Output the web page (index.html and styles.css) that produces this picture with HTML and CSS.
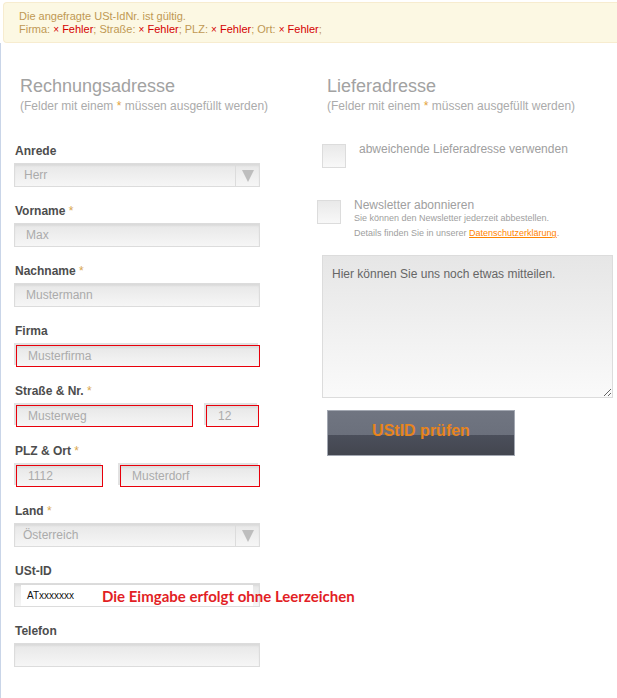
FILE: index.html
```html
<!DOCTYPE html>
<html lang="de">
<head>
<meta charset="utf-8">
<title>Adresse</title>
<link rel="stylesheet" href="styles.css">
</head>
<body>
<div class="alert">
  <div>Die angefragte USt-IdNr. ist gültig.</div>
  <div>Firma: <span class="x">×</span> <span class="bad">Fehler</span>; Straße: <span class="x">×</span> <span class="bad">Fehler</span>; PLZ: <span class="x">×</span> <span class="bad">Fehler</span>; Ort: <span class="x">×</span> <span class="bad">Fehler</span>;</div>
</div>
<div class="main">
  <section class="col col-left">
    <h2 class="title">Rechnungsadresse</h2>
    <p class="hint">(Felder mit einem <span class="req">*</span> müssen ausgefüllt werden)</p>
    <div class="fields">
      <div class="row">
        <label class="lbl">Anrede</label>
        <div class="field select"><span class="val">Herr</span><span class="arrow"><span class="tri"></span></span></div>
      </div>
      <div class="row">
        <label class="lbl">Vorname <span class="req">*</span></label>
        <div class="field"><span class="val">Max</span></div>
      </div>
      <div class="row">
        <label class="lbl">Nachname <span class="req">*</span></label>
        <div class="field"><span class="val">Mustermann</span></div>
      </div>
      <div class="row">
        <label class="lbl">Firma</label>
        <div class="field err w-firma"><span class="val">Musterfirma</span></div>
      </div>
      <div class="row">
        <label class="lbl">Straße &amp; Nr. <span class="req">*</span></label>
        <div class="pair">
          <div class="field err w-street"><span class="val">Musterweg</span></div>
          <div class="field err w-nr"><span class="val">12</span></div>
        </div>
      </div>
      <div class="row">
        <label class="lbl">PLZ &amp; Ort <span class="req">*</span></label>
        <div class="pair">
          <div class="field err w-plz"><span class="val">1112</span></div>
          <div class="field err w-ort"><span class="val">Musterdorf</span></div>
        </div>
      </div>
      <div class="row">
        <label class="lbl">Land <span class="req">*</span></label>
        <div class="field select"><span class="val val-sel">Österreich</span><span class="arrow"><span class="tri"></span></span></div>
      </div>
      <div class="row">
        <label class="lbl">USt-ID</label>
        <div class="field ust"><span class="inner">ATxxxxxxx</span><span class="note">Die Eimgabe erfolgt ohne Leerzeichen</span></div>
      </div>
      <div class="row">
        <label class="lbl">Telefon</label>
        <div class="field"></div>
      </div>
    </div>
  </section>
  <section class="col col-right">
    <h2 class="title">Lieferadresse</h2>
    <p class="hint">(Felder mit einem <span class="req">*</span> müssen ausgefüllt werden)</p>
    <div class="check check-1">
      <span class="box"></span>
      <span class="check-text">abweichende Lieferadresse verwenden</span>
    </div>
    <div class="check check-2">
      <span class="box"></span>
      <div class="check-text">
        <div class="nl-title">Newsletter abonnieren</div>
        <div class="small">Sie können den Newsletter jederzeit abbestellen.</div>
        <div class="small">Details finden Sie in unserer <a href="#" class="link">Datenschutzerklärung</a>.</div>
      </div>
    </div>
    <textarea class="msg" placeholder="Hier können Sie uns noch etwas mitteilen."></textarea>
    <button class="btn" type="button">UStID prüfen</button>
  </section>
</div>
</body>
</html>
```
FILE: styles.css
```css
html, body {
  margin: 0;
  padding: 0;
  background: #fff;
}
body {
  font-family: "Liberation Sans", Arial, sans-serif;
  font-size: 12px;
  width: 617px;
  height: 698px;
  overflow: hidden;
}

.alert {
  margin: 2px 0 0 3px;
  padding: 7px 15px 6px 15px;
  background: #fcf8e3;
  border: 1px solid #f7eccf;
  border-right: none;
  border-radius: 4px 0 0 4px;
  color: #c09853;
  font-size: 11px;
  line-height: 13px;
}
.alert .x {
  color: #d40000;
  font-size: 10px;
}
.alert .bad {
  color: #d40000;
}

.main {
  display: flex;
  border-left: 1px solid #c9d5e8;
  min-height: 655px;
}
.col {
  padding-top: 33px;
}
.col-left {
  width: 246px;
  padding-left: 13px;
  padding-right: 57px;
}
.col-right {
  width: 300px;
}

.title {
  margin: 0 0 3px 6px;
  font-size: 18px;
  line-height: 20px;
  font-weight: normal;
  color: #a2a2a2;
  white-space: nowrap;
}
.col-right .title {
  margin-left: 10px;
}
.hint {
  margin: 0 0 0 6px;
  font-size: 12px;
  line-height: 14px;
  color: #ababab;
  white-space: nowrap;
}
.col-right .hint {
  margin-left: 10px;
}
.req {
  color: #e3a33a;
}

.fields {
  margin-top: 31px;
}
.row {
  display: flex;
  flex-direction: column;
  margin-bottom: 17px;
}
.lbl {
  display: block;
  padding-left: 1px;
  margin-bottom: 5px;
  font-weight: bold;
  font-size: 12px;
  line-height: 14px;
  color: #4d4d4d;
}
.lbl .req {
  color: #d9a64e;
  font-weight: normal;
}

.field {
  box-sizing: border-box;
  height: 24px;
  border: 1px solid #dcdcdc;
  background: linear-gradient(#e7e7e7, #f6f6f6);
  box-shadow: inset 0 2px 2px rgba(0, 0, 0, 0.06);
  display: flex;
  align-items: center;
  color: #ababab;
  font-size: 12px;
  line-height: 14px;
  position: relative;
}
.field .val {
  padding-left: 11px;
  flex: 1;
}
.field.err {
  height: 22px;
  margin-top: 2px;
  border: 1px solid #e8000b;
  box-shadow: -2px -2px 0 #e2e2e2, inset 0 2px 2px rgba(0, 0, 0, 0.05);
}
.field.err .val {
  padding-left: 11px;
}
.select .val {
  padding-left: 9px;
}
.select .val-sel {
  padding-left: 8px;
}
.select .arrow {
  width: 24px;
  height: 100%;
  border-left: 1px solid #dcdcdc;
  display: flex;
  justify-content: center;
  padding-top: 6px;
  box-sizing: border-box;
}
.tri {
  width: 0;
  height: 0;
  border-left: 6px solid transparent;
  border-right: 6px solid transparent;
  border-top: 12px solid #bdbdbd;
}

.pair {
  display: flex;
  justify-content: space-between;
  align-items: flex-start;
}
.w-firma { width: 244px; margin-left: 2px; }
.w-street { width: 177px; margin-left: 2px; }
.w-nr { width: 53px; margin-right: 1px; }
.w-plz { width: 87px; margin-left: 2px; }
.w-ort { width: 140px; }

.ust {
  padding: 1px 6px 0 6px;
  align-items: stretch;
}
.ust .inner {
  flex: 1;
  background: #fff;
  color: #111;
  font-size: 10px;
  line-height: 21px;
  padding-left: 6px;
}
.note {
  position: absolute;
  left: 87px;
  top: 3px;
  white-space: nowrap;
  font-family: Lato, "Open Sans", sans-serif;
  font-weight: bold;
  font-size: 15px;
  line-height: 18px;
  color: #e21e25;
}

.check {
  display: flex;
  align-items: flex-start;
  color: #a0a0a0;
}
.check .box {
  box-sizing: border-box;
  width: 24px;
  height: 24px;
  border: 1px solid #dcdcdc;
  background: linear-gradient(#e9e9e9, #f8f8f8);
  flex: none;
  margin-right: 13px;
}
.check-1 {
  margin-top: 29px;
  margin-left: 5px;
}
.check-1 .box {
  margin-top: 2px;
}
.check-1 .check-text {
  font-size: 12px;
  line-height: 14px;
}
.check-2 {
  margin-top: 31px;
}
.check-2 .box {
  margin-top: 1px;
}
.nl-title {
  font-size: 12px;
  line-height: 12px;
}
.small {
  font-size: 9px;
  line-height: 15px;
}
.link {
  color: #ff8400;
  text-decoration: underline;
}

.msg {
  display: block;
  box-sizing: border-box;
  width: 291px;
  height: 143px;
  margin: 14px 0 0 5px;
  padding: 11px 9px;
  border: 1px solid #dcdcdc;
  background: linear-gradient(#e6e6e6, #fafafa);
  font-family: "Liberation Sans", Arial, sans-serif;
  font-size: 12px;
  line-height: 14px;
  color: #666;
  resize: both;
}
.msg::placeholder {
  color: #666;
  opacity: 1;
}

.btn {
  display: block;
  box-sizing: border-box;
  width: 188px;
  height: 46px;
  margin: 12px 0 0 10px;
  padding: 0;
  border: 1px solid #a3a8b2;
  background: linear-gradient(#707581 0, #6b707c 54%, #4b4f5b 54%, #43464f 100%);
  color: #e8841c;
  font-family: "Liberation Sans", Arial, sans-serif;
  font-weight: bold;
  font-size: 16px;
  line-height: 18px;
  padding-bottom: 4px;
}
```
